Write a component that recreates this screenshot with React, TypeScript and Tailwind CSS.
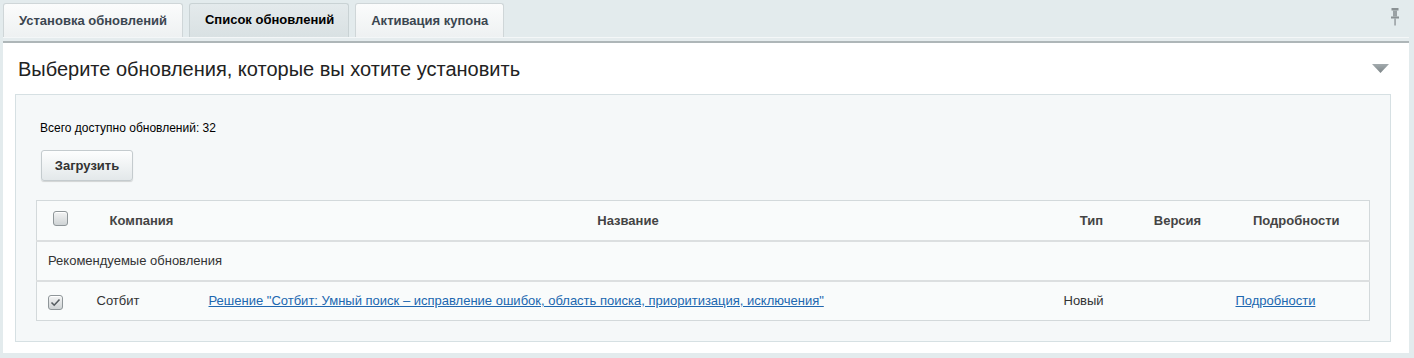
import React from "react";

const font = { fontFamily: '"Liberation Sans", Arial, sans-serif' };

function Tab({ label, active }: { label: string; active?: boolean }) {
  return (
    <div
      className={
        active
          ? "flex h-[34px] items-center rounded-t-[3px] border border-b-0 border-[#c9d2d4] bg-gradient-to-b from-[#e4eaec] to-[#d9e1e3] pl-[15px] pr-[14px] pb-[2px] text-[13px] font-bold text-black"
          : "flex h-[34px] items-center rounded-t-[3px] border border-b-0 border-[#cfd6d8] bg-gradient-to-b from-[#fbfcfc] to-[#eef1f2] px-[15px] text-[13px] font-bold text-[#3b4650]"
      }
    >
      {label}
    </div>
  );
}

function Checkbox({ checked }: { checked?: boolean }) {
  return (
    <span className="inline-flex h-[15px] w-[15px] items-center justify-center rounded-[3px] border border-[#8f9699] bg-gradient-to-b from-[#f3f4f4] to-[#cfd3d5] shadow-[inset_0_1px_0_#fff]">
      {checked && (
        <svg width="11" height="9" viewBox="0 0 11 9">
          <path d="M1.5 4.5 L4.2 7.2 L9.5 1.5" fill="none" stroke="#555c60" strokeWidth="1.6" />
        </svg>
      )}
    </span>
  );
}

export default function App() {
  return (
    <div style={font} className="h-[358px] w-[1414px] overflow-hidden bg-[#e3ebed]">
      <div className="flex items-end gap-[6px] pl-[3px] pr-[14px] pt-[3px]">
        <Tab label="Установка обновлений" />
        <Tab label="Список обновлений" active />
        <Tab label="Активация купона" />
        <div className="ml-auto flex h-[34px] items-start pt-[5px]">
          <svg width="10" height="18" viewBox="0 0 10 18">
            <rect x="1.5" y="0" width="7" height="2.5" fill="#8a9194" />
            <rect x="3" y="2.5" width="4" height="6" fill="#9aa1a4" />
            <rect x="1" y="8.5" width="8" height="2" fill="#8a9194" />
            <rect x="4.4" y="10.5" width="1.3" height="7" fill="#8a9194" />
          </svg>
        </div>
      </div>
      <div className="mx-[3px] mr-[5px] h-[6px] border-t border-[#f4f7f8] border-b-2 border-b-[#aeb6b8] bg-[#e5ecee]" />
      <div className="mx-[3px] mr-[5px] h-[310px] bg-white">
        <div className="flex h-[51px] items-center justify-between pl-[15px] pr-[20px]">
          <div className="text-[20px] text-[#222]">Выберите обновления, которые вы хотите установить</div>
          <svg width="17" height="9" viewBox="0 0 17 9">
            <defs>
              <linearGradient id="tg" x1="0" y1="0" x2="0" y2="1">
                <stop offset="0" stopColor="#a3abae" />
                <stop offset="1" stopColor="#7d8588" />
              </linearGradient>
            </defs>
            <path d="M0 0 H17 L8.5 9 Z" fill="url(#tg)" />
          </svg>
        </div>
        <div className="ml-[12px] mr-[18px] h-[248px] border border-[#d6e0e3] bg-[#f5f8f9] px-[20px] pt-[24px]">
          <div className="pl-[4px] text-[12px] text-black">Всего доступно обновлений: 32</div>
          <button className="ml-[5px] mt-[13px] h-[31px] w-[92px] rounded-[3px] border border-[#c4cbce] bg-gradient-to-b from-[#fdfefe] to-[#e3e8ea] text-[13px] font-bold text-[#333] shadow-[0_1px_1px_rgba(0,0,0,0.15)]">
            Загрузить
          </button>
          <table className="mt-[19px] w-[1334px] table-fixed border-collapse border border-[#d3d9db] bg-[#f9fbfb] text-[13px]">
            <colgroup>
              <col className="w-[52px]" />
              <col className="w-[112px]" />
              <col />
              <col className="w-[72px]" />
              <col className="w-[100px]" />
              <col className="w-[142px]" />
            </colgroup>
            <thead>
              <tr className="h-[40px] border-b-2 border-[#dcdfe0] font-bold text-[#444]">
                <th className="pl-[16px] text-left align-middle">
                  <span className="relative top-[1px]">
                    <Checkbox />
                  </span>
                </th>
                <th className="pr-[6px] text-center">Компания</th>
                <th className="text-center">Название</th>
                <th className="text-center">Тип</th>
                <th className="text-center">Версия</th>
                <th className="pr-[4px] text-center">Подробности</th>
              </tr>
            </thead>
            <tbody>
              <tr className="h-[40px] border-b-2 border-[#dcdfe0]">
                <td colSpan={6} className="pl-[11px] text-[#333]">Рекомендуемые обновления</td>
              </tr>
              <tr className="h-[40px] text-[#333]">
                <td className="pl-[11px]">
                  <span className="relative top-[2px]">
                    <Checkbox checked />
                  </span>
                </td>
                <td className="pl-[8px]">Сотбит</td>
                <td className="pl-[8px]">
                  <a href="#" className="text-[#2067b0] underline">
                    Решение "Сотбит: Умный поиск – исправление ошибок, область поиска, приоритизация, исключения"
                  </a>
                </td>
                <td className="pl-[8px]">Новый</td>
                <td />
                <td className="pl-[8px]">
                  <a href="#" className="text-[#2067b0] underline">
                    Подробности
                  </a>
                </td>
              </tr>
            </tbody>
          </table>
        </div>
      </div>
    </div>
  );
}
